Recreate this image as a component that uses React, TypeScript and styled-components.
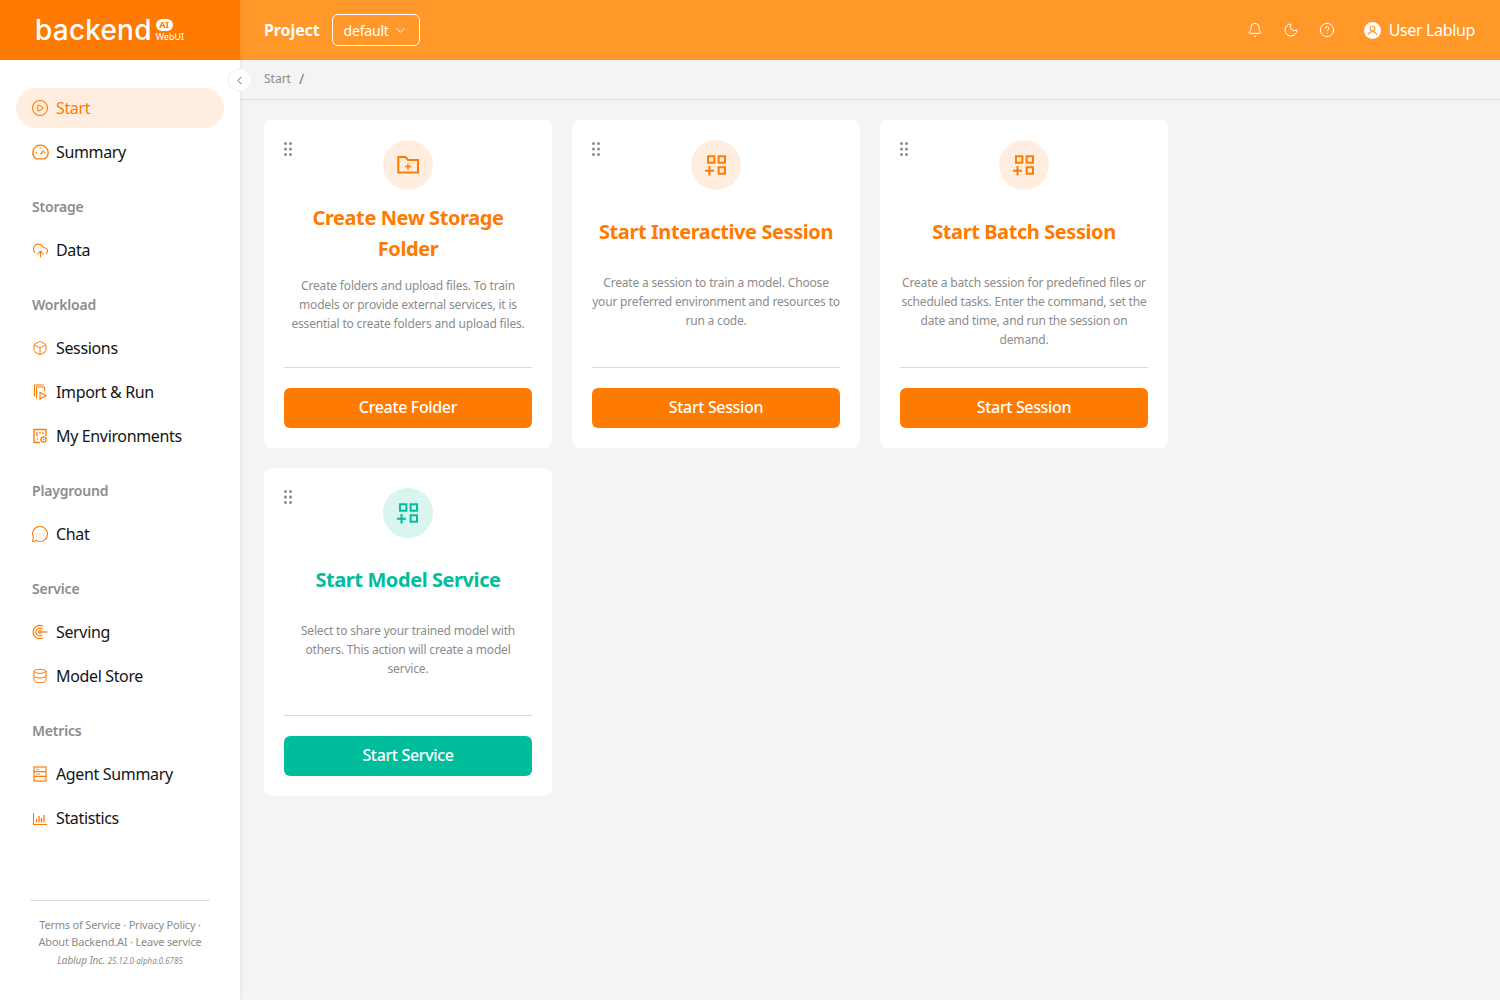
import React from 'react'
import styled, { createGlobalStyle } from 'styled-components'
import {
  Bell,
  Box,
  ChevronDown,
  ChevronLeft,
  CirclePlay,
  CircleHelp,
  CloudUpload,
  Database,
  MessageCircleMore,
  Moon
} from 'lucide-react'

const ORANGE = '#ff7a00'
const TEAL = '#00bd9b'
const FONT = `"Noto Sans", "Open Sans", sans-serif`

const GlobalStyle = createGlobalStyle`
  html, body {
    margin: 0;
    padding: 0;
    background: #f4f4f4;
    font-family: ${FONT};
  }
  * { box-sizing: border-box; }
`

const SummaryIcon = () => (
  <svg width='17' height='17' viewBox='0 0 17 17' fill='none' stroke='currentColor' strokeWidth='1.3'>
    <path d='M4 14.8h9c2-1.400 3.200-3.500 3.200-6a7.700 7.700 0 0 0-15.400 0c0 2.500 1.200 4.600 3.200 6z' />
    <path d='M8.500 10.500l3-4' />
    <path d='M8.500 3.300v1.200M3.800 8.500H5M13.200 8.500H12' />
  </svg>
)

const ImportRunIcon = () => (
  <svg width='16' height='16' viewBox='0 0 16 16' fill='none' stroke='currentColor' strokeWidth='1.1'>
    <path d='M2.500 12.500V1h9' />
    <path d='M4.500 14.500V3h8v4' />
    <path d='M8 8.500v6.500l6-3.200z' />
  </svg>
)

const EnvIcon = () => (
  <svg width='16' height='16' viewBox='0 0 16 16' fill='none' stroke='currentColor' strokeWidth='1.3'>
    <path d='M8 14.500H2V1.500h12V8' />
    <path d='M5 4v4M8 4v2M11 4v2M5 11h1' />
    <circle cx='11.500' cy='11.500' r='2.600' />
    <path d='M11.500 10.500v2M10.500 11.500h2' strokeWidth='.8' />
  </svg>
)

const ServingIcon = () => (
  <svg width='16' height='16' viewBox='0 0 16 16' fill='none' stroke='currentColor' strokeWidth='1.2'>
    <path d='M11 2.200A6.600 6.600 0 1 0 11 13.800' />
    <path d='M10.200 5A3.800 3.800 0 1 0 10.200 11' />
    <circle cx='8' cy='8' r='1.300' />
    <path d='M9 8h6.500' />
  </svg>
)

const AgentIcon = () => (
  <svg width='16' height='16' viewBox='0 0 16 16' fill='none' stroke='currentColor' strokeWidth='1.200'>
    <rect x='2' y='1' width='12' height='14' />
    <path d='M2 5.600h12M2 10.400h12' />
    <path d='M4 3.300h3M4 8h4M11 12.800h1' strokeWidth='.9' />
  </svg>
)

const StatsIcon = () => (
  <svg width='16' height='16' viewBox='0 0 16 16' fill='none' stroke='currentColor' strokeWidth='1.100'>
    <path d='M1.500 3v11.500h13.500' />
    <path d='M4.500 12.500V9M7 12.500V6M9.500 12.500V8M12 12.500V5' strokeWidth='1.300' />
  </svg>
)

const FolderAddIcon = () => (
  <svg width='24' height='24' viewBox='0 0 24 24' fill='none' stroke='currentColor' strokeWidth='2'>
    <path d='M2.300 4H9.500L12 7H22V19.500H2.300Z' />
    <path d='M12 10.500v6M9 13.500h6' strokeWidth='1.500' />
  </svg>
)

const AppPlusIcon = () => (
  <svg width='24' height='24' viewBox='0 0 24 24' fill='none' stroke='currentColor' strokeWidth='2'>
    <rect x='4' y='3.300' width='6.400' height='6.400' />
    <rect x='14.600' y='3.300' width='6.400' height='6.400' />
    <rect x='14.600' y='14.300' width='6.400' height='6.400' />
    <path d='M1 17.700h9M5.500 13v9.400' />
  </svg>
)

const UserBadgeIcon = () => (
  <svg width='17' height='17' viewBox='0 0 18 18'>
    <circle cx='9' cy='9' r='9' fill='#fff' />
    <circle cx='9' cy='7' r='2.500' fill='none' stroke='#ff9729' strokeWidth='1.200' />
    <path d='M4.600 13.600c.5-2.200 2.300-3.400 4.400-3.400s3.900 1.200 4.400 3.400' fill='none' stroke='#ff9729' strokeWidth='1.200' />
  </svg>
)

const GripIcon = () => (
  <svg width='8' height='14' viewBox='0 0 8 14' fill='#8c8c8c'>
    <circle cx='1.500' cy='1.500' r='1.500' />
    <circle cx='6.500' cy='1.500' r='1.500' />
    <circle cx='1.500' cy='7' r='1.500' />
    <circle cx='6.500' cy='7' r='1.500' />
    <circle cx='1.500' cy='12.500' r='1.500' />
    <circle cx='6.500' cy='12.500' r='1.500' />
  </svg>
)

const navGroups = [
  {
    items: [
      { label: 'Start', icon: <CirclePlay size={18} strokeWidth={1.4} />, active: true },
      { label: 'Summary', icon: <SummaryIcon /> }
    ]
  },
  { title: 'Storage', items: [{ label: 'Data', icon: <CloudUpload size={17} strokeWidth={1.5} /> }] },
  {
    title: 'Workload',
    items: [
      { label: 'Sessions', icon: <Box size={16} strokeWidth={1.5} /> },
      { label: 'Import & Run', icon: <ImportRunIcon /> },
      { label: 'My Environments', icon: <EnvIcon /> }
    ]
  },
  { title: 'Playground', items: [{ label: 'Chat', icon: <MessageCircleMore size={18} strokeWidth={1.4} /> }] },
  {
    title: 'Service',
    items: [
      { label: 'Serving', icon: <ServingIcon /> },
      { label: 'Model Store', icon: <Database size={16} strokeWidth={1.5} /> }
    ]
  },
  {
    title: 'Metrics',
    items: [
      { label: 'Agent Summary', icon: <AgentIcon /> },
      { label: 'Statistics', icon: <StatsIcon /> }
    ]
  }
]

const cards = [
  {
    title: 'Create New Storage Folder',
    desc: 'Create folders and upload files. To train models or provide external services, it is essential to create folders and upload files.',
    action: 'Create Folder',
    icon: <FolderAddIcon />,
    accent: ORANGE,
    tint: '#ffeee0',
    inset: -0.8
  },
  {
    title: 'Start Interactive Session',
    desc: 'Create a session to train a model. Choose your preferred environment and resources to run a code.',
    action: 'Start Session',
    icon: <AppPlusIcon />,
    accent: ORANGE,
    tint: '#ffeee0',
    inset: -0.8
  },
  {
    title: 'Start Batch Session',
    desc: 'Create a batch session for predefined files or scheduled tasks. Enter the command, set the date and time, and run the session on demand.',
    action: 'Start Session',
    icon: <AppPlusIcon />,
    accent: ORANGE,
    tint: '#ffeee0',
    inset: -0.8
  },
  {
    title: 'Start Model Service',
    desc: 'Select to share your trained model with others. This action will create a model service.',
    action: 'Start Service',
    icon: <AppPlusIcon />,
    accent: TEAL,
    tint: '#d9f5ef',
    inset: 4
  }
]

export default function App() {
  return (
    <Page>
      <GlobalStyle />
      <Sidebar>
        <LogoBar>
          <LogoText>backend</LogoText>
          <LogoSide>
            <LogoBadge>AI</LogoBadge>
            <LogoSub>WebUI</LogoSub>
          </LogoSide>
        </LogoBar>
        <Menu>
          {navGroups.map((group, i) => (
            <NavGroup key={i} $first={!group.title}>
              {group.title && <GroupTitle>{group.title}</GroupTitle>}
              {group.items.map(item => (
                <NavItem key={item.label} $active={item.active}>
                  <NavIcon>{item.icon}</NavIcon>
                  {item.label}
                </NavItem>
              ))}
            </NavGroup>
          ))}
        </Menu>
        <Footer>
          <FooterLine>Terms of Service · Privacy Policy ·</FooterLine>
          <FooterLine>About Backend.AI · Leave service</FooterLine>
          <FooterCompany>
            Lablup Inc. <small>25.12.0-alpha.0.6785</small>
          </FooterCompany>
        </Footer>
        <CollapseButton>
          <ChevronLeft size={13} strokeWidth={1.6} />
        </CollapseButton>
      </Sidebar>
      <Content>
        <Header>
          <ProjectLabel>Project</ProjectLabel>
          <ProjectSelect>
            default
            <ChevronDown size={15} strokeWidth={1.4} />
          </ProjectSelect>
          <HeaderRight>
            <HeaderIcon><Bell size={16} strokeWidth={1.5} /></HeaderIcon>
            <HeaderIcon><Moon size={16} strokeWidth={1.5} /></HeaderIcon>
            <HeaderIcon><CircleHelp size={16} strokeWidth={1.5} /></HeaderIcon>
            <UserBox>
              <UserBadgeIcon />
              User Lablup
            </UserBox>
          </HeaderRight>
        </Header>
        <Breadcrumb>
          <span>Start</span>
          <Slash>/</Slash>
        </Breadcrumb>
        <CardGrid>
          {cards.map(card => (
            <Card key={card.title}>
              <Grip><GripIcon /></Grip>
              <IconCircle $accent={card.accent} $tint={card.tint}>{card.icon}</IconCircle>
              <CardTitle $accent={card.accent}>{card.title}</CardTitle>
              <CardDesc $inset={card.inset}>{card.desc}</CardDesc>
              <Divider />
              <ActionButton $accent={card.accent}>{card.action}</ActionButton>
            </Card>
          ))}
        </CardGrid>
      </Content>
    </Page>
  )
}

const Page = styled.div`
  display: flex;
  width: 1500px;
  height: 1000px;
  overflow: hidden;
`

const Sidebar = styled.aside`
  position: relative;
  z-index: 2;
  flex: 0 0 240px;
  display: flex;
  flex-direction: column;
  background: #fff;
  box-shadow: 0 0 6px rgba(0, 0, 0, 0.08);
`

const LogoBar = styled.div`
  flex: 0 0 60px;
  display: flex;
  align-items: center;
  padding-left: 35px;
  background: ${ORANGE};
  color: #fff;
`

const LogoText = styled.span`
  font-family: Inter, sans-serif;
  font-size: 28px;
  font-weight: 500;
  letter-spacing: 0.2px;
  line-height: 1;
`

const LogoSide = styled.div`
  display: flex;
  flex-direction: column;
  align-items: flex-start;
  margin-left: 4px;
`

const LogoBadge = styled.span`
  width: 17px;
  height: 12px;
  border-radius: 6px;
  background: #fff;
  color: ${ORANGE};
  font-size: 9px;
  font-weight: 700;
  line-height: 12px;
  text-align: center;
`

const LogoSub = styled.span`
  font-size: 9px;
  line-height: 11px;
`

const Menu = styled.nav`
  padding: 28px 16px 0;
`

const NavGroup = styled.div<{ $first?: boolean }>`
  margin-top: ${p => (p.$first ? 0 : 12)}px;
`

const GroupTitle = styled.div`
  height: 46px;
  padding: 0 0 2px 16px;
  display: flex;
  align-items: center;
  color: #8c8c8c;
  font-size: 14px;
  font-weight: 600;
  letter-spacing: -0.2px;
`

const NavItem = styled.div<{ $active?: boolean }>`
  height: 40px;
  margin-bottom: 4px;
  padding-left: 16px;
  display: flex;
  align-items: center;
  gap: 8px;
  border-radius: 20px;
  font-size: 16px;
  letter-spacing: -0.35px;
  color: ${p => (p.$active ? ORANGE : '#141414')};
  background: ${p => (p.$active ? '#ffeee0' : 'transparent')};
  &:last-child {
    margin-bottom: 0;
  }
`

const NavIcon = styled.span`
  width: 16px;
  height: 16px;
  display: flex;
  align-items: center;
  justify-content: center;
  color: ${ORANGE};
  svg {
    flex: none;
  }
`

const Footer = styled.footer`
  margin: auto 30px 30px;
  padding-top: 15px;
  border-top: 1px solid #ddd;
  color: #8c8c8c;
  text-align: center;
`

const FooterLine = styled.div`
  font-size: 11px;
  line-height: 17px;
  letter-spacing: -0.2px;
  white-space: nowrap;
`

const FooterCompany = styled.div`
  margin-top: 1px;
  font-size: 10px;
  line-height: 19px;
  letter-spacing: -0.1px;
  font-style: italic;
  small {
    font-size: 8px;
    letter-spacing: 0;
  }
`

const CollapseButton = styled.div`
  position: absolute;
  top: 68px;
  left: 228px;
  width: 24px;
  height: 24px;
  padding-right: 1px;
  display: flex;
  align-items: center;
  justify-content: center;
  border-radius: 50%;
  background: #fff;
  border: 1px solid #eee;
  color: #555;
`

const Content = styled.main`
  flex: 1;
  display: flex;
  flex-direction: column;
  background: #f4f4f4;
`

const Header = styled.header`
  flex: 0 0 60px;
  display: flex;
  align-items: center;
  padding: 0 25px 0 24px;
  background: #ff9729;
  color: #fff;
`

const ProjectLabel = styled.div`
  font-size: 16px;
  font-weight: 700;
  letter-spacing: -0.1px;
  margin-right: 12px;
`

const ProjectSelect = styled.div`
  width: 88px;
  height: 32px;
  padding: 0 11px;
  display: flex;
  align-items: center;
  justify-content: space-between;
  border: 1px solid #fff;
  border-radius: 6px;
  font-size: 14px;
  letter-spacing: -0.2px;
`

const HeaderRight = styled.div`
  margin-left: auto;
  display: flex;
  align-items: center;
`

const HeaderIcon = styled.span`
  width: 36px;
  display: flex;
  justify-content: center;
`

const UserBox = styled.div`
  margin-left: 19px;
  display: flex;
  align-items: center;
  gap: 8px;
  font-size: 16px;
  letter-spacing: -0.35px;
`

const Breadcrumb = styled.div`
  flex: 0 0 40px;
  display: flex;
  align-items: center;
  padding: 0 0 2px 24px;
  border-bottom: 1px solid #ddd;
  color: #8c8c8c;
  font-size: 12px;
`

const Slash = styled.span`
  margin-left: 8px;
  color: #777;
  font-size: 14px;
`

const CardGrid = styled.section`
  padding: 20px 24px;
  display: grid;
  grid-template-columns: repeat(3, 288px);
  grid-auto-rows: 328px;
  gap: 20px;
`

const Card = styled.article`
  position: relative;
  display: flex;
  flex-direction: column;
  padding: 20px;
  background: #fff;
  border-radius: 8px;
  text-align: center;
`

const Grip = styled.span`
  position: absolute;
  top: 22px;
  left: 20px;
  line-height: 0;
`

const IconCircle = styled.div<{ $accent: string; $tint: string }>`
  flex: none;
  width: 50px;
  height: 50px;
  margin: 0 auto;
  display: flex;
  align-items: center;
  justify-content: center;
  border-radius: 50%;
  background: ${p => p.$tint};
  color: ${p => p.$accent};
`

const CardTitle = styled.h3<{ $accent: string }>`
  margin: 0;
  padding: 12px 0;
  min-height: 83px;
  display: flex;
  align-items: center;
  justify-content: center;
  color: ${p => p.$accent};
  font-size: 20px;
  font-weight: 700;
  line-height: 31px;
  letter-spacing: -0.42px;
`

const CardDesc = styled.p<{ $inset: number }>`
  flex: 1;
  margin: 0 ${p => p.$inset}px;
  color: #8c8c8c;
  font-size: 12px;
  line-height: 19px;
  letter-spacing: -0.18px;
`

const Divider = styled.div`
  flex: none;
  height: 1px;
  margin-bottom: 20px;
  background: #d9d9d9;
`

const ActionButton = styled.button<{ $accent: string }>`
  flex: none;
  height: 40px;
  padding: 0 0 2px;
  border: 0;
  border-radius: 6px;
  background: ${p => p.$accent};
  color: #fff;
  font-family: ${FONT};
  font-size: 16px;
  font-weight: 500;
  letter-spacing: -0.35px;
`
